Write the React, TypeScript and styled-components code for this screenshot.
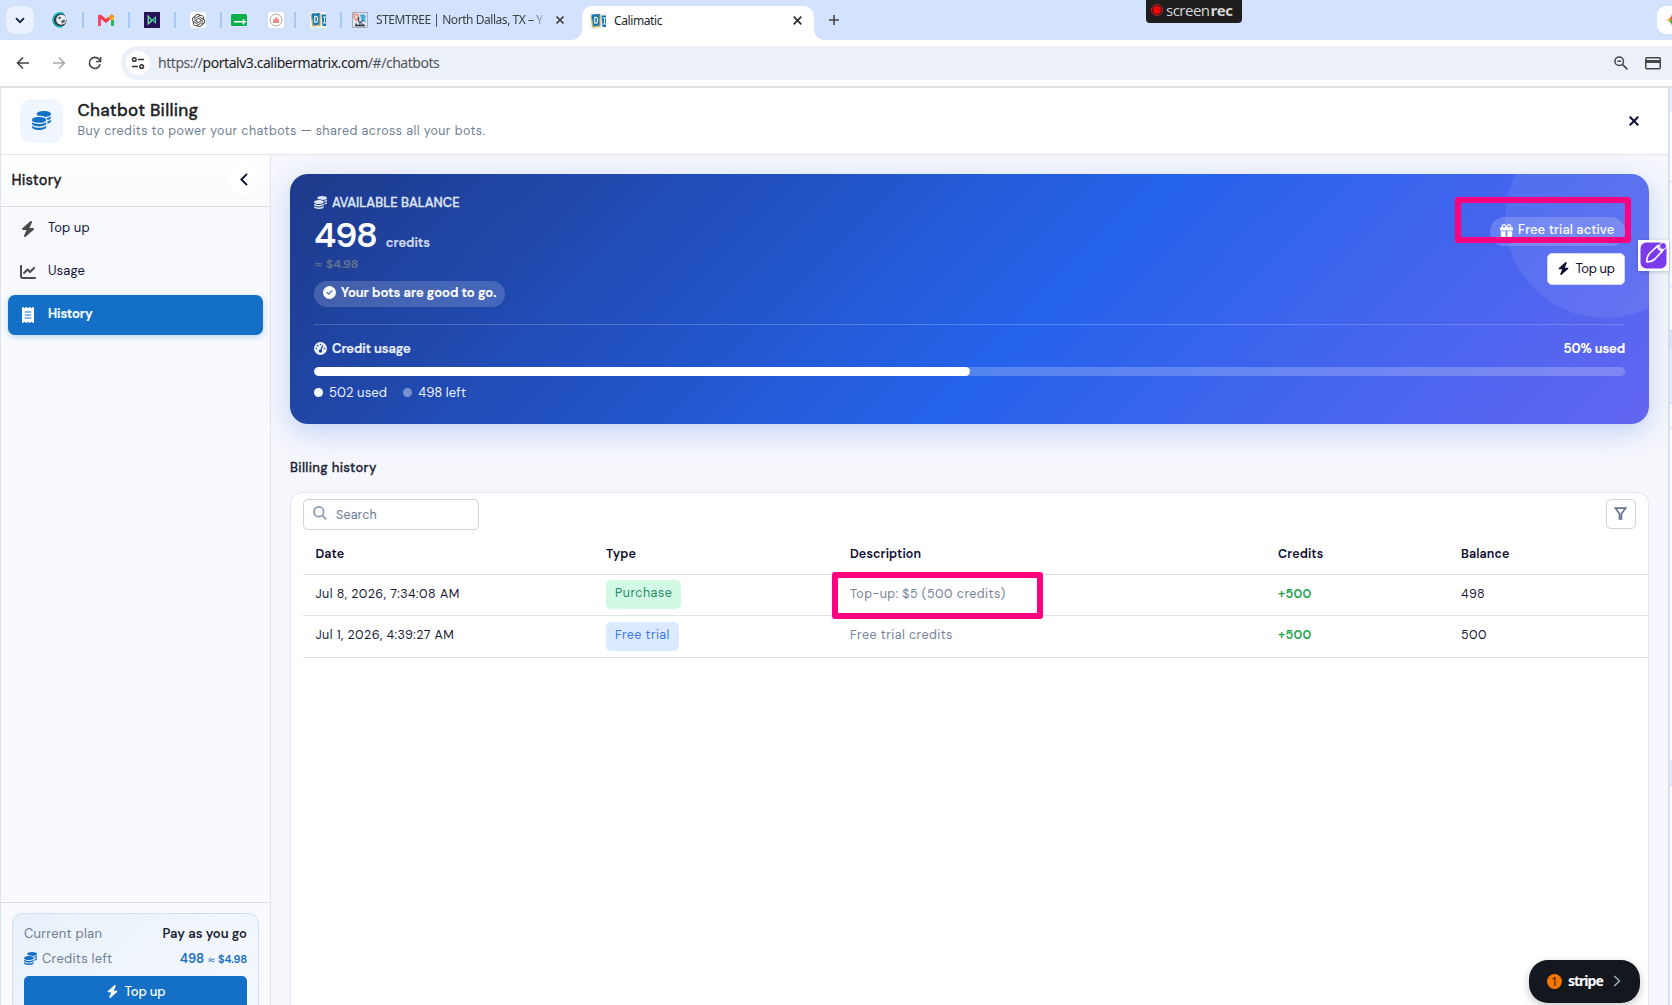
import React from "react";
import styled, { createGlobalStyle, css } from "styled-components";
import {
  FaBolt,
  FaChartLine,
  FaCircleCheck,
  FaCoins,
  FaGaugeHigh,
  FaGift,
  FaReceipt,
} from "react-icons/fa6";
import { SiOpenai } from "react-icons/si";

const ui = `"DM Sans", Inter, "Liberation Sans", sans-serif`;
const chrome = `"Segoe UI", "Noto Sans", "Open Sans", sans-serif`;

const Global = createGlobalStyle`
  * { box-sizing: border-box; }
  body { margin: 0; overflow: hidden; font-family: ${ui}; color: #1a1a35; }
  svg { display: block; flex: none; }
`;

const Screen = styled.div`
  position: relative;
  width: 1672px;
  height: 1005px;
  overflow: hidden;
  display: flex;
  flex-direction: column;
  background: #fff;
`;

/* ---------- browser chrome ---------- */

const TabStrip = styled.div`
  height: 40px;
  flex: none;
  display: flex;
  align-items: center;
  background: #d3e2fd;
  font: 12px/16px ${chrome};
  color: #3c4043;
`;

const TabSearch = styled.div`
  width: 28px;
  height: 28px;
  margin-left: 6px;
  border-radius: 9px;
  background: #ebf1fe;
  display: grid;
  place-items: center;
`;

const Pinned = styled.div<{ $ml: number }>`
  width: 16px;
  height: 16px;
  margin-left: ${(p) => p.$ml}px;
  flex: none;
`;

const WhiteTile = styled.div`
  width: 16px;
  height: 16px;
  border-radius: 3px;
  background: #fff;
  color: #333;
  display: grid;
  place-items: center;
`;

const Separator = styled.i<{ $ml: number }>`
  width: 2px;
  height: 16px;
  margin-left: ${(p) => p.$ml}px;
  background: #a8c7fa;
  flex: none;
`;

const TabTitle = styled.span<{ $w: number; $fade?: boolean }>`
  width: ${(p) => p.$w}px;
  margin-left: 8px;
  overflow: hidden;
  white-space: nowrap;
  letter-spacing: -0.4px;
  ${(p) =>
    p.$fade &&
    css`
      letter-spacing: -0.45px;
      mask-image: linear-gradient(90deg, #000 93%, rgba(0, 0, 0, 0.15));
    `}
`;

const ActiveTab = styled.div`
  position: relative;
  align-self: flex-end;
  width: 232px;
  height: 34px;
  margin-left: 14px;
  padding: 0 12px 5px 8px;
  border-radius: 10px 10px 0 0;
  background: #fff;
  color: #1f1f1f;
  display: flex;
  align-items: center;
  &::before,
  &::after {
    content: "";
    position: absolute;
    bottom: 0;
    width: 10px;
    height: 10px;
  }
  &::before {
    left: -10px;
    background: radial-gradient(circle at 0 0, transparent 9.5px, #fff 10px);
  }
  &::after {
    right: -10px;
    background: radial-gradient(circle at 100% 0, transparent 9.5px, #fff 10px);
  }
`;

const Push = styled.span`
  flex: 1;
`;

const GeminiButton = styled.div`
  width: 15px;
  height: 28px;
  padding-left: 9px;
  border-radius: 9px 0 0 9px;
  background: #fff;
  overflow: hidden;
  display: flex;
  align-items: center;
`;

const Toolbar = styled.div`
  height: 48px;
  flex: none;
  display: flex;
  align-items: center;
  padding: 0 0 0 15px;
  border-bottom: 2px solid #dfe1e5;
  gap: 20px;
`;

const Omnibox = styled.div`
  flex: 1;
  height: 34px;
  margin-left: -2px;
  padding: 0 11px 0 5px;
  border-radius: 17px 0 0 17px;
  background: #ecf0f9;
  display: flex;
  align-items: center;
`;

const SiteInfo = styled.div`
  width: 24px;
  height: 24px;
  border-radius: 50%;
  background: #fff;
  display: grid;
  place-items: center;
`;

const Url = styled.span`
  margin-left: 8px;
  flex: 1;
  font: 14px/20px ${chrome};
  letter-spacing: -0.46px;
  color: #50545a;
  b {
    font-weight: 400;
    color: #1c1c1e;
  }
`;

const OmniIcons = styled.div`
  display: flex;
  gap: 16px;
`;

const ScreenRec = styled.div`
  position: absolute;
  left: 1146px;
  top: 0;
  width: 96px;
  height: 23px;
  padding: 0 0 3px 6px;
  border-radius: 0 0 4px 4px;
  background: #1e1e1e;
  color: #d8d8d8;
  display: flex;
  align-items: center;
  gap: 4px;
  font: 15px/18px "Open Sans", sans-serif;
  letter-spacing: -0.5px;
  white-space: nowrap;
  b {
    margin-left: 1px;
    font-weight: 700;
  }
`;

const RecDot = styled.i`
  width: 10px;
  height: 10px;
  border-radius: 50%;
  background: #f00;
  border: 1px solid #1e1e1e;
  outline: 1px solid #c22;
`;

/* ---------- page frame ---------- */

const Page = styled.div`
  flex: 1;
  min-height: 0;
  display: flex;
  border-left: 1px solid #dde4f0;
`;

const Dialog = styled.div`
  width: 1667px;
  display: flex;
  flex-direction: column;
  background: #f6f7fc;
`;

const Header = styled.header`
  height: 67px;
  flex: none;
  display: flex;
  align-items: center;
  padding: 0 29px 1px 19px;
  border-bottom: 1px solid #e3e5e9;
  background: #fff;
`;

const HeaderIcon = styled.div`
  width: 43px;
  height: 44px;
  border-radius: 11px;
  background: #eff6ff;
  color: #1470c6;
  display: grid;
  place-items: center;
`;

const HeaderText = styled.div`
  flex: 1;
  margin-left: 14.5px;
`;

const Title = styled.h1`
  margin: 0;
  font-size: 17px;
  line-height: 21px;
  font-weight: 500;
  letter-spacing: 0.26px;
  color: #1e1e24;
  -webkit-text-stroke: 0.3px;
`;

const Subtitle = styled.p`
  margin: 0;
  font-size: 12.5px;
  line-height: 20px;
  letter-spacing: 0.43px;
  color: #6f7f94;
`;

const Body = styled.div`
  flex: 1;
  min-height: 0;
  display: flex;
`;

const SideRail = styled.aside`
  width: 270px;
  flex: none;
  display: flex;
  flex-direction: column;
  border-right: 1px solid #e2e6ec;
  background: #f9fafd;
`;

const SideHead = styled.div`
  height: 52px;
  display: flex;
  align-items: center;
  justify-content: space-between;
  padding: 0 12px 2px 10.5px;
  border-bottom: 1px solid #dadce0;
  background: linear-gradient(#fff, #f8fafc);
  font-size: 14.5px;
  font-weight: 500;
  letter-spacing: 0.2px;
  color: #1e1e24;
  -webkit-text-stroke: 0.3px;
`;

const Collapse = styled.div`
  width: 29px;
  height: 29px;
  border-radius: 50%;
  background: #fff;
  display: grid;
  place-items: center;
`;

const Nav = styled.nav`
  flex: 1;
  padding: 2px 7px;
  display: flex;
  flex-direction: column;
  gap: 3px;
`;

const NavItem = styled.div<{ $active?: boolean }>`
  height: 40px;
  padding-bottom: 4px;
  display: grid;
  grid-template-columns: 40px 1fr;
  align-items: center;
  border-radius: 7px;
  font-size: 13px;
  letter-spacing: 0.1px;
  color: #14143a;
  > svg {
    justify-self: center;
    color: #4b4b4b;
    margin-top: 3px;
  }
  ${(p) =>
    p.$active &&
    css`
      background: #1470c6;
      color: #fff;
      font-weight: 600;
      letter-spacing: -0.1px;
      -webkit-text-stroke: 0.2px;
      box-shadow: 0 2px 6px rgba(20, 112, 198, 0.25);
      > svg {
        color: #fff;
      }
    `}
`;

const SideFoot = styled.div`
  height: 103px;
  overflow: hidden;
  padding: 10px 11px 0;
  border-top: 1px solid #dadce0;
`;

const PlanCard = styled.div`
  height: 120px;
  padding: 7px 11px;
  border: 1px solid #cfe1f4;
  border-radius: 10px;
  background: linear-gradient(135deg, #e8f1fa, #f6f9fd);
  font-size: 13px;
`;

const PlanRow = styled.div`
  height: 25px;
  display: flex;
  align-items: center;
  justify-content: space-between;
  color: #6f7f94;
`;

const PlanLabel = styled.span`
  display: flex;
  align-items: center;
  gap: 5px;
  letter-spacing: 0.25px;
  svg {
    color: #1470c6;
  }
`;

const PlanValue = styled.span<{ $accent?: boolean }>`
  font-weight: 600;
  letter-spacing: ${(p) => (p.$accent ? "-0.1px" : "0.02px")};
  color: ${(p) => (p.$accent ? "#1470c6" : "#1e2433")};
  small {
    font-size: 11px;
  }
`;

const About = styled.span`
  font-family: "DejaVu Sans", sans-serif;
  font-weight: 400;
  font-size: 0.9em;
  line-height: 1;
`;

const PlanButton = styled.div`
  height: 34px;
  margin-top: 5px;
  padding-bottom: 4px;
  border-radius: 5px;
  background: #1470c6;
  color: #fff;
  display: flex;
  align-items: center;
  justify-content: center;
  gap: 6px;
  font-weight: 500;
  letter-spacing: -0.1px;
`;

/* ---------- main column ---------- */

const Main = styled.main`
  flex: 1;
  padding: 19px 19px 0;
  display: flex;
  flex-direction: column;
`;

const Balance = styled.section`
  position: relative;
  height: 250px;
  flex: none;
  padding: 17px 24px 0;
  border-radius: 18px;
  color: #fff;
  background: linear-gradient(135deg, #1e3a8a 0%, #2563eb 55%, #6366f1 100%);
  box-shadow: 0 8px 28px rgba(37, 99, 235, 0.25);
`;

const GlowClip = styled.div`
  position: absolute;
  inset: 0;
  overflow: hidden;
  border-radius: 18px;
  &::after {
    content: "";
    position: absolute;
    top: -56px;
    right: -56px;
    width: 200px;
    height: 200px;
    border-radius: 50%;
    background: rgba(255, 255, 255, 0.08);
  }
`;

const BalanceTop = styled.div`
  position: relative;
  height: 134px;
  display: flex;
  justify-content: space-between;
  border-bottom: 1px solid rgba(255, 255, 255, 0.2);
`;

const Caption = styled.div`
  height: 23px;
  display: flex;
  align-items: center;
  gap: 5px;
  font-size: 13px;
  font-weight: 500;
  letter-spacing: 0.03px;
  color: #dde4f6;
  -webkit-text-stroke: 0.35px;
`;

const Amount = styled.div`
  height: 43px;
  display: flex;
  align-items: baseline;
  gap: 9px;
  font-size: 35px;
  line-height: 43px;
  font-weight: 600;
  letter-spacing: -1.1px;
  span {
    font-size: 13px;
    letter-spacing: -0.05px;
    color: #d0daf3;
    -webkit-text-stroke: 0.2px;
  }
`;

const Approx = styled.div`
  height: 16px;
  font-size: 12px;
  line-height: 14px;
  font-weight: 600;
  letter-spacing: 0;
  color: #64748b;
`;

const StatusPill = styled.div`
  width: 191px;
  height: 26px;
  margin-top: 8px;
  padding: 0 0 3px 9px;
  border-radius: 13px;
  background: rgba(255, 255, 255, 0.17);
  display: flex;
  align-items: center;
  gap: 5px;
  font-size: 13px;
  font-weight: 600;
  letter-spacing: 0.01px;
  -webkit-text-stroke: 0.2px;
  white-space: nowrap;
`;

const BalanceActions = styled.div`
  padding-top: 26px;
  display: flex;
  flex-direction: column;
  align-items: flex-end;
  gap: 7px;
`;

const TrialPill = styled.div`
  width: 135px;
  height: 29px;
  padding: 0 0 4px 10px;
  border-radius: 15px;
  background: rgba(255, 255, 255, 0.18);
  display: flex;
  align-items: center;
  gap: 5px;
  font-size: 13px;
  font-weight: 500;
  letter-spacing: 0.09px;
  white-space: nowrap;
  svg {
    margin-top: 2px;
  }
`;

const TopUpButton = styled.div`
  width: 78px;
  height: 32px;
  padding: 0 1px 1px 0;
  border: 1px solid #d5d9e4;
  border-radius: 5px;
  background: #fff;
  color: #0c0c33;
  display: flex;
  align-items: center;
  justify-content: center;
  gap: 6px;
  font-size: 13px;
  letter-spacing: -0.35px;
`;

const UsageRow = styled.div`
  position: relative;
  height: 42px;
  padding-top: 5px;
  display: flex;
  align-items: center;
  justify-content: space-between;
  font-size: 13px;
  font-weight: 600;
  letter-spacing: -0.1px;
  -webkit-text-stroke: 0.2px;
`;

const UsageLabel = styled.span`
  display: flex;
  align-items: center;
  gap: 5px;
  color: #eaf0fd;
`;

const Track = styled.div`
  position: relative;
  height: 9px;
  border-radius: 5px;
  background: rgba(255, 255, 255, 0.22);
  overflow: hidden;
`;

const Fill = styled.div`
  height: 100%;
  border-radius: 5px;
  background: #fff;
`;

const Legend = styled.div`
  height: 32px;
  display: flex;
  align-items: center;
  gap: 16px;
  font-size: 13px;
  letter-spacing: 0.12px;
  color: #eef2fe;
`;

const LegendItem = styled.span<{ $dim?: boolean }>`
  display: flex;
  align-items: center;
  gap: 6px;
  &::before {
    content: "";
    width: 9px;
    height: 9px;
    border-radius: 50%;
    background: ${(p) => (p.$dim ? "rgba(255,255,255,.4)" : "#fff")};
  }
`;

const SectionTitle = styled.h2`
  height: 68px;
  margin: 0;
  padding-top: 35px;
  font-size: 13px;
  line-height: 18px;
  font-weight: 500;
  letter-spacing: 0.34px;
  color: #1c2536;
  -webkit-text-stroke: 0.3px;
`;

const Panel = styled.section`
  flex: 1;
  padding: 6px 0 0 12px;
  border: 1px solid #e4e8f0;
  border-bottom: 0;
  border-radius: 12px 12px 0 0;
  background: #fff;
`;

const PanelTools = styled.div`
  display: flex;
  justify-content: space-between;
  padding-right: 12px;
`;

const Search = styled.div`
  width: 176px;
  height: 31px;
  padding-left: 9px;
  border: 1px solid #cdd3dd;
  border-radius: 5px;
  display: flex;
  align-items: center;
  gap: 9px;
  font-size: 12.5px;
  letter-spacing: 0.15px;
  color: #6b7a90;
  svg {
    margin-top: -4px;
  }
`;

const FilterButton = styled.div`
  width: 30px;
  height: 30px;
  padding: 0 1px 2px 0;
  border: 1px solid #cdd3dd;
  border-radius: 5px;
  display: grid;
  place-items: center;
`;

const Row = styled.div<{ $h: number; $head?: boolean }>`
  height: ${(p) => p.$h}px;
  padding: 0 0 3px 12.4px;
  display: grid;
  grid-template-columns: 290.6px 244px 428px 183px 1fr;
  align-items: center;
  border-bottom: 1px solid #e1e3e6;
  font-size: 12.5px;
  letter-spacing: ${(p) => (p.$head ? "0.12px" : "0.45px")};
  ${(p) =>
    p.$head &&
    css`
      padding-top: 6px;
      font-weight: 600;
      color: #0c0c33;
    `}
`;

const Muted = styled.span`
  color: #74839a;
  letter-spacing: 0.45px;
`;

const Gain = styled.span`
  color: #1ea34b;
  font-weight: 600;
  letter-spacing: 0.3px;
`;

const Tag = styled.span<{ $kind: "purchase" | "trial" }>`
  justify-self: start;
  width: ${(p) => (p.$kind === "purchase" ? 75 : 73)}px;
  height: 29px;
  margin-top: 2px;
  padding: 0 0 3px 9px;
  border-radius: 5px;
  display: flex;
  align-items: center;
  letter-spacing: ${(p) => (p.$kind === "purchase" ? 0.5 : 0.4)}px;
  background: ${(p) => (p.$kind === "purchase" ? "#d1fae5" : "#dbeafe")};
  color: ${(p) => (p.$kind === "purchase" ? "#2b8a68" : "#3f78ea")};
`;

/* ---------- layer behind the dialog, visible at the right edge ---------- */

const Behind = styled.div`
  flex: 1;
  display: flex;
  flex-direction: column;
  border-left: 2px solid #d5e2f5;
  background: #fff;
`;

const Sliver = styled.i<{ $h: number; $bg: string }>`
  height: ${(p) => p.$h}px;
  background: ${(p) => p.$bg};
  border-bottom: 1px solid #c8daf6;
`;

/* ---------- floating items ---------- */

const Marker = styled.div<{ $x: number; $y: number; $w: number; $h: number }>`
  position: absolute;
  left: ${(p) => p.$x}px;
  top: ${(p) => p.$y}px;
  width: ${(p) => p.$w}px;
  height: ${(p) => p.$h}px;
  border: 6px solid #ff0080;
  border-radius: 3px;
`;

const PenWidget = styled.div`
  position: absolute;
  left: 1638px;
  top: 240px;
  width: 31px;
  height: 31px;
  background: #fff;
  box-shadow: 0 1px 4px rgba(0, 0, 0, 0.2);
  display: grid;
  place-items: center;
`;

const StripeButton = styled.div`
  position: absolute;
  left: 1529px;
  top: 960px;
  width: 111px;
  height: 43px;
  padding: 0 19px 1px 18px;
  border-radius: 19px;
  background: #14171e;
  color: #fff;
  box-shadow: 0 3px 10px rgba(0, 0, 0, 0.22);
  display: flex;
  align-items: center;
  font: 700 14px/20px "Noto Sans", sans-serif;
  letter-spacing: -1px;
  svg {
    margin-left: auto;
  }
`;

const StripeCount = styled.span`
  width: 15px;
  height: 15px;
  margin-right: 6px;
  border-radius: 50%;
  background: #f57600;
  color: #3a2410;
  text-align: center;
  font-size: 12px;
  line-height: 15px;
  font-weight: 400;
  letter-spacing: 0;
`;

/* ---------- drawings ---------- */

const Cross = ({ size = 8, w = 1.6, color = "#333" }) => (
  <svg width={size} height={size} viewBox="0 0 8 8" stroke={color} strokeWidth={w}>
    <path d="M.6.6 7.4 7.4M7.4.6.6 7.4" />
  </svg>
);

const GlobeIcon = () => (
  <svg width="16" height="16" viewBox="0 0 16 16">
    <circle cx="7.500" cy="8" r="7" fill="#2a4148" />
    <path d="M12 2A7 7 0 1 0 10.500 14.500" fill="none" stroke="#16b5c4" strokeWidth="1.500" />
    <circle cx="9.200" cy="7.800" r="5" fill="#eceff1" />
    <path d="M6 5.500 8 4.500l1.200 1-1 1.400L7 7.500zM9 9.500l2.500-2 2 .5-1.500 2.500-2 1z" fill="#5c5f64" />
    <path d="M13 3.500h3V7h-2z" fill="#d3e2fd" />
  </svg>
);

const GmailIcon = () => (
  <svg width="16" height="16" viewBox="0 0 16 16" fill="none" strokeWidth="3">
    <path d="M14.500 14V3.500" stroke="#35b45b" />
    <path d="M14.500 8V3.500" stroke="#fbc02d" />
    <path d="M1.200 3.400 8 9l6.800-5.600" stroke="#f5334a" />
    <path d="M11 6.500 14.800 3.400" stroke="#fb9a2d" />
    <path d="M1.500 14V3" stroke="#fd4468" />
  </svg>
);

const BowtieIcon = () => (
  <svg width="16" height="16" viewBox="0 0 16 16">
    <path d="M0 0h16v16H0z" fill="#2b1257" />
    <path d="M4.200 4.200v7.600L8 8.600z" fill="none" stroke="#6beaa5" strokeWidth="1.300" />
    <path d="M7.500 8 12 4v8l-3-3z" fill="#43d6a4" />
    <path d="M10.400 6.800v2.400" stroke="#2b1257" strokeWidth=".8" />
  </svg>
);

const SheetIcon = () => (
  <svg width="16" height="16" viewBox="0 0 16 16">
    <rect y="2" width="16" height="12" rx="1.5" fill="#0bb04c" />
    <path d="M3 9.800h12M12.500 7v5.500" stroke="#fff" strokeWidth="1.600" />
  </svg>
);

const SealIcon = () => (
  <svg width="16" height="16" viewBox="0 0 16 16">
    <rect width="16" height="16" rx="3" fill="#fff" />
    <circle cx="8" cy="8" r="6" fill="none" stroke="#b9a4a4" />
    <path d="M5 11V7.500l2-.5 1-2 1.500.5V7l1.500.5V11z" fill="#f18c86" />
  </svg>
);

const BookIcon = () => (
  <svg width="16" height="16" viewBox="0 0 16 16">
    <path d="M0 0h16v16H0z" fill="#f4f4ee" />
    <path d="M1.500 1.500 10 1v11.500l-7 1z" fill="#1377b6" />
    <path d="M1 2.500 3 14l7-.5M10 1.500v12" stroke="#c7a75b" strokeWidth="1.200" fill="none" />
    <path d="M4.800 4.300h1.300c2 0 2 6 0 6H4.800z" fill="none" stroke="#fff" strokeWidth="1.100" />
    <path d="M11.500 2.500H16V14h-3.500z" fill="#1377b6" />
    <path d="M12.800 5H16M14.500 5v6M13 11h3" stroke="#fff" strokeWidth=".9" />
  </svg>
);

const StemIcon = () => (
  <svg width="16" height="16" viewBox="0 0 16 16">
    <rect x=".5" y=".5" width="15" height="15" fill="#dfe3ea" stroke="#a9b0bd" />
    <path d="M2 2l4 1 1 4-3 1-2-3z" fill="none" stroke="#ef8f78" strokeWidth="1.500" />
    <path d="M8 3l3-1 3 2-1 3 1 3-4-1z" fill="#4aa9e6" />
    <path d="M6 5c1 4 0 5 2 6l3-3" fill="none" stroke="#3a556e" strokeWidth="1.300" />
    <path d="M3 13.500h10M4 11.500l1.500 3M8 11.500v3M10 11.500l2 3" stroke="#3a3d45" strokeWidth="1.300" />
  </svg>
);

const BackIcon = ({ color, flip }: { color: string; flip?: boolean }) => (
  <svg width="16" height="16" viewBox="0 0 16 16" fill="none" stroke={color} strokeWidth="1.600">
    <path d="M14 8H3M8 2.500 2.500 8 8 13.500" transform={flip ? "rotate(180 8 8)" : undefined} />
  </svg>
);

const ReloadIcon = () => (
  <svg width="16" height="16" viewBox="0 0 16 16" fill="none" stroke="#444746" strokeWidth="1.600">
    <path d="M13.200 9.300A5.500 5.500 0 1 1 12.200 4.500L13.500 6" />
    <path d="M13.600 2v4.500H9" />
  </svg>
);

const TuneIcon = () => (
  <svg width="14" height="14" viewBox="0 0 14 14" fill="none" stroke="#333" strokeWidth="1.500">
    <circle cx="3.300" cy="3.500" r="1.800" />
    <path d="M7 3.500h6M1 10.500h6" />
    <circle cx="10.700" cy="10.500" r="1.800" />
  </svg>
);

const ZoomOutIcon = () => (
  <svg width="16" height="16" viewBox="0 0 16 16" fill="none" stroke="#444746" strokeWidth="1.500">
    <circle cx="6.200" cy="6.200" r="4.300" />
    <path d="M4.300 6.200h3.800M9.400 9.400l5 5" />
  </svg>
);

const CardIcon = () => (
  <svg width="16" height="16" viewBox="0 0 16 16">
    <rect x=".8" y="2.800" width="14.400" height="11" rx="1" fill="none" stroke="#444746" strokeWidth="1.500" />
    <path d="M1 5h14v3H1z" fill="#444746" />
  </svg>
);

const SparkIcon = () => (
  <svg width="12" height="12" viewBox="0 0 12 12">
    <path d="M0 6q5-1 6-6v12Q5 7 0 6z" fill="#e3b23a" />
    <path d="M3 5q2.500-1 3-5v6z" fill="#e2574a" />
    <path d="M3 7q2.500 1 3 5V6z" fill="#3bab5c" />
  </svg>
);

const SearchIcon = () => (
  <svg width="14" height="14" viewBox="0 0 14 14" fill="none" stroke="#8b9ab0" strokeWidth="1.700">
    <circle cx="5.800" cy="5.800" r="4.900" />
    <path d="M9.300 9.300 13.300 13.300" />
  </svg>
);

const FilterIcon = () => (
  <svg width="13" height="13" viewBox="0 0 13 13" fill="none" stroke="#64748b" strokeWidth="1.700">
    <path d="M1.500 1.200h10L7.500 6.800v5H5.500v-5z" />
  </svg>
);

const PenIcon = () => (
  <svg width="27" height="27" viewBox="0 0 27 27" fill="none" stroke="#fff" strokeWidth="1.700">
    <rect x=".5" y=".5" width="26" height="26" rx="6" fill="#7c3aed" stroke="none" />
    <path d="M7 20c-.5-3 .3-6 2.500-8.500L18 3.500c2 .5 4 2.500 4.800 5L15 17c-2.500 2.300-5 3.200-8 3z" />
    <path d="M17.500 4c.5 2.500 2.300 4.300 5 5" />
    <circle cx="23" cy="4" r="3.500" fill="#7c3aed" stroke="#fff" strokeWidth="1" />
  </svg>
);

/* ---------- content ---------- */

const rows = [
  { date: "Jul 8, 2026, 7:34:08 AM", kind: "purchase" as const, type: "Purchase", text: "Top-up: $5 (500 credits)", credits: "+500", balance: "498", h: 41 },
  { date: "Jul 1, 2026, 4:39:27 AM", kind: "trial" as const, type: "Free trial", text: "Free trial credits", credits: "+500", balance: "500", h: 42 },
];

const used = 502;
const left = 498;
const percent = Math.round((used / (used + left)) * 100);

export default function App() {
  return (
    <Screen>
      <Global />
      <TabStrip>
        <TabSearch>
          <svg width="10" height="7" viewBox="0 0 10 7" fill="none" stroke="#13254a" strokeWidth="1.900">
            <path d="M1 1.200l4 4 4-4" />
          </svg>
        </TabSearch>
        <Pinned $ml={18}><GlobeIcon /></Pinned>
        <Separator $ml={14} />
        <Pinned $ml={14}><GmailIcon /></Pinned>
        <Separator $ml={14} />
        <Pinned $ml={14}><BowtieIcon /></Pinned>
        <Separator $ml={14} />
        <Pinned $ml={14}><WhiteTile><SiOpenai size={13} /></WhiteTile></Pinned>
        <Separator $ml={14} />
        <Pinned $ml={9}><SheetIcon /></Pinned>
        <Pinned $ml={21}><SealIcon /></Pinned>
        <Separator $ml={10} />
        <Pinned $ml={14}><BookIcon /></Pinned>
        <Separator $ml={14} />
        <Pinned $ml={10}><StemIcon /></Pinned>
        <TabTitle $w={168} $fade>STEMTREE | North Dallas, TX – Y</TabTitle>
        <Pinned $ml={8}><svg width="16" height="16" viewBox="0 0 16 16" stroke="#3c4043" strokeWidth="1.700"><path d="M4.500 4.500l7 7M11.500 4.500l-7 7" /></svg></Pinned>
        <ActiveTab>
          <BookIcon />
          <TabTitle $w={120}>Calimatic</TabTitle>
          <Push />
          <Cross size={9} />
        </ActiveTab>
        <Pinned $ml={12}>
          <svg width="16" height="16" viewBox="0 0 16 16" stroke="#444746" strokeWidth="1.600"><path d="M8 3v10M3 8h10" /></svg>
        </Pinned>
        <Push />
        <GeminiButton><SparkIcon /></GeminiButton>
      </TabStrip>
      <Toolbar>
        <BackIcon color="#444746" />
        <BackIcon color="#a9abad" flip />
        <ReloadIcon />
        <Omnibox>
          <SiteInfo><TuneIcon /></SiteInfo>
          <Url>https://<b>portalv3.calibermatrix.com</b>/#/chatbots</Url>
          <OmniIcons><ZoomOutIcon /><CardIcon /></OmniIcons>
        </Omnibox>
      </Toolbar>

      <Page>
        <Dialog>
          <Header>
            <HeaderIcon><FaCoins size={19} /></HeaderIcon>
            <HeaderText>
              <Title>Chatbot Billing</Title>
              <Subtitle>Buy credits to power your chatbots — shared across all your bots.</Subtitle>
            </HeaderText>
            <Cross size={10} w={1.5} color="#0c0c33" />
          </Header>
          <Body>
            <SideRail>
              <SideHead>
                History
                <Collapse>
                  <svg width="8" height="13" viewBox="0 0 8 13" fill="none" stroke="#0c0c33" strokeWidth="1.900">
                    <path d="M7 .8 1.400 6.500 7 12.200" />
                  </svg>
                </Collapse>
              </SideHead>
              <Nav>
                <NavItem><FaBolt size={16} />Top up</NavItem>
                <NavItem><FaChartLine size={16} />Usage</NavItem>
                <NavItem $active><FaReceipt size={16} />History</NavItem>
              </Nav>
              <SideFoot>
                <PlanCard>
                  <PlanRow>
                    <PlanLabel>Current plan</PlanLabel>
                    <PlanValue>Pay as you go</PlanValue>
                  </PlanRow>
                  <PlanRow>
                    <PlanLabel><FaCoins size={13} />Credits left</PlanLabel>
                    <PlanValue $accent>{left} <small><About>≈</About> $4.98</small></PlanValue>
                  </PlanRow>
                  <PlanButton><FaBolt size={13} />Top up</PlanButton>
                </PlanCard>
              </SideFoot>
            </SideRail>

            <Main>
              <Balance>
                <GlowClip />
                <BalanceTop>
                  <div>
                    <Caption><FaCoins size={13} />AVAILABLE BALANCE</Caption>
                    <Amount>{left}<span>credits</span></Amount>
                    <Approx><About>≈</About> $4.98</Approx>
                    <StatusPill><FaCircleCheck size={13} />Your bots are good to go.</StatusPill>
                  </div>
                  <BalanceActions>
                    <TrialPill><FaGift size={13} />Free trial active</TrialPill>
                    <TopUpButton><FaBolt size={13} />Top up</TopUpButton>
                  </BalanceActions>
                </BalanceTop>
                <UsageRow>
                  <UsageLabel><FaGaugeHigh size={13} />Credit usage</UsageLabel>
                  <span>{percent}% used</span>
                </UsageRow>
                <Track><Fill style={{ width: `${percent}%` }} /></Track>
                <Legend>
                  <LegendItem>{used} used</LegendItem>
                  <LegendItem $dim>{left} left</LegendItem>
                </Legend>
              </Balance>
              <SectionTitle>Billing history</SectionTitle>
              <Panel>
                <PanelTools>
                  <Search><SearchIcon />Search</Search>
                  <FilterButton><FilterIcon /></FilterButton>
                </PanelTools>
                <Row $h={45} $head>
                  <span>Date</span>
                  <span>Type</span>
                  <span>Description</span>
                  <span>Credits</span>
                  <span>Balance</span>
                </Row>
                {rows.map((r) => (
                  <Row key={r.date} $h={r.h}>
                    <span>{r.date}</span>
                    <Tag $kind={r.kind}>{r.type}</Tag>
                    <Muted>{r.text}</Muted>
                    <Gain>{r.credits}</Gain>
                    <span>{r.balance}</span>
                  </Row>
                ))}
              </Panel>
            </Main>
          </Body>
        </Dialog>
        <Behind>
          <Sliver $h={23} $bg="#eaf0fd" />
          <Sliver $h={71} $bg="#fff" />
          <Sliver $h={105} $bg="#fff" />
          <Sliver $h={44} $bg="#fff" />
          <Sliver $h={17} $bg="#dce6fb" />
          <Sliver $h={56} $bg="#e6effd" />
          <Sliver $h={24} $bg="#fff" />
          <Sliver $h={334} $bg="#fff" />
          <Sliver $h={24} $bg="#e6ecfb" />
        </Behind>
      </Page>

      <ScreenRec><RecDot /><span>screen<b>rec</b></span></ScreenRec>
      <Marker $x={1455} $y={197} $w={176} $h={46} />
      <Marker $x={832} $y={572} $w={211} $h={47} />
      <PenWidget><PenIcon /></PenWidget>
      <StripeButton>
        <StripeCount>1</StripeCount>
        stripe
        <svg width="8" height="12" viewBox="0 0 8 12" fill="none" stroke="#a9b4c4" strokeWidth="1.400">
          <path d="M1.200 1 6.500 6 1.200 11" />
        </svg>
      </StripeButton>
    </Screen>
  );
}
